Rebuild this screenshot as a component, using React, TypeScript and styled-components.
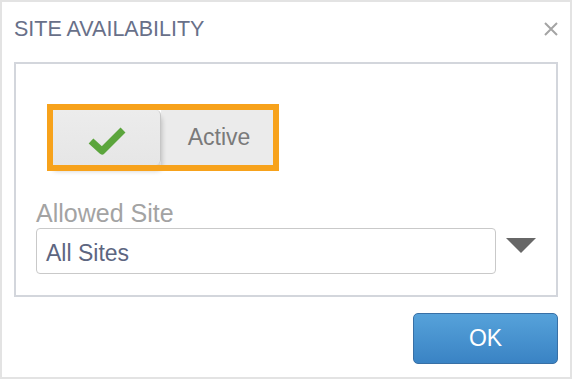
import React from "react";
import styled, { createGlobalStyle } from "styled-components";

const Global = createGlobalStyle`
  html, body { margin: 0; padding: 0; background: #fff; }
  body { font-family: "Liberation Sans", Arial, sans-serif; }
`;

const Dialog = styled.div`
  box-sizing: border-box;
  width: 572px;
  height: 379px;
  border: 2px solid #e3e3e3;
  display: flex;
  flex-direction: column;
  background: #fff;
`;

const Header = styled.div`
  height: 54px;
  display: flex;
  align-items: center;
  justify-content: space-between;
  padding: 0 12px;
`;

const Title = styled.h1`
  margin: 0;
  font-size: 21.5px;
  font-weight: normal;
  color: #687089;
`;

const CloseButton = styled.button`
  width: 14px;
  height: 14px;
  padding: 0;
  border: none;
  background: none;
  display: flex;
  align-items: center;
  justify-content: center;
  cursor: pointer;
`;

const Panel = styled.div`
  box-sizing: border-box;
  margin: 6px 12px 0;
  height: 235px;
  border: 2px solid #d3d6dc;
  padding: 40px 0 0 20px;
  display: flex;
  flex-direction: column;
  align-items: flex-start;
`;

const Toggle = styled.div`
  position: relative;
  box-sizing: border-box;
  margin-left: 11px;
  width: 232px;
  height: 67px;
  padding: 6px;
  display: flex;
  &::after {
    content: "";
    position: absolute;
    inset: 0;
    border: 6px solid #f7a21b;
    pointer-events: none;
    z-index: 2;
  }
`;

const Knob = styled.div`
  position: relative;
  z-index: 1;
  box-sizing: border-box;
  width: 108px;
  height: 55px;
  background: linear-gradient(#ececec, #e6e6e6);
  border-right: 1px solid #c6c6c6;
  border-radius: 0 5px 5px 0;
  box-shadow: 1px 6px 5px rgba(0, 0, 0, 0.2);
  display: flex;
  align-items: center;
  justify-content: center;
  padding-top: 5px;
`;

const ToggleText = styled.div`
  flex: 1;
  background: #ebebeb;
  display: flex;
  align-items: center;
  justify-content: center;
  padding-left: 4px;
  font-size: 23px;
  color: #7a7a7a;
`;

const FieldLabel = styled.div`
  margin-top: 28px;
  font-size: 25px;
  line-height: 29px;
  color: #a3a3a3;
`;

const SelectRow = styled.div`
  display: flex;
  align-items: flex-start;
  gap: 10px;
`;

const SelectBox = styled.div`
  box-sizing: border-box;
  width: 460px;
  height: 46px;
  border: 1px solid #c9c9c9;
  border-radius: 4px;
  padding: 4px 0 0 9px;
  display: flex;
  align-items: center;
  font-size: 23px;
  color: #5d6681;
`;

const Caret = styled.div`
  margin-top: 10px;
  width: 0;
  height: 0;
  border-left: 15px solid transparent;
  border-right: 15px solid transparent;
  border-top: 15px solid #676767;
`;

const Footer = styled.div`
  display: flex;
  justify-content: flex-end;
  padding: 16px 12px 0;
`;

const OkButton = styled.button`
  box-sizing: border-box;
  width: 145px;
  height: 51px;
  border: 1px solid #3870a6;
  border-radius: 5px;
  background: linear-gradient(#56a2da, #3a83c4);
  color: #fff;
  font-family: "Liberation Sans", Arial, sans-serif;
  font-size: 23px;
  cursor: pointer;
`;

export default function App() {
  return (
    <>
      <Global />
      <Dialog>
        <Header>
          <Title>SITE AVAILABILITY</Title>
          <CloseButton aria-label="Close">
            <svg width="14" height="14" viewBox="0 0 14 14">
              <path d="M1 1 L13 13 M13 1 L1 13" stroke="#a4a4a4" strokeWidth="2" />
            </svg>
          </CloseButton>
        </Header>
        <Panel>
          <Toggle>
            <Knob>
              <svg width="40" height="32" viewBox="0 0 40 32">
                <path
                  d="M4 17 L15 27 L36 6"
                  fill="none"
                  stroke="#5ba53c"
                  strokeWidth="7"
                  strokeLinejoin="round"
                />
              </svg>
            </Knob>
            <ToggleText>Active</ToggleText>
          </Toggle>
          <FieldLabel>Allowed Site</FieldLabel>
          <SelectRow>
            <SelectBox>All Sites</SelectBox>
            <Caret />
          </SelectRow>
        </Panel>
        <Footer>
          <OkButton>OK</OkButton>
        </Footer>
      </Dialog>
    </>
  );
}
